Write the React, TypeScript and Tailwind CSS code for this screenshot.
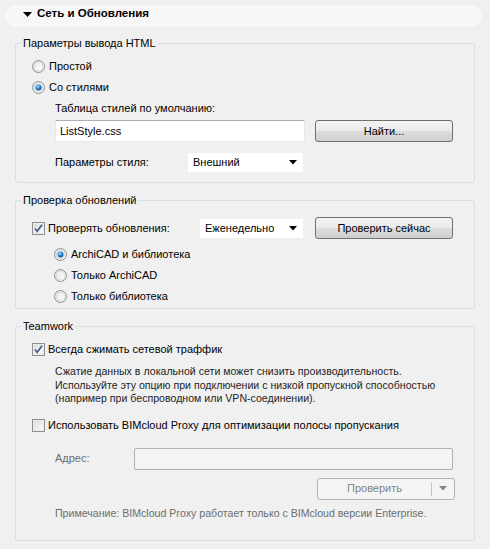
import React from "react";

const font = { fontFamily: '"Liberation Sans", Arial, sans-serif' };

const Radio = ({ checked }: { checked?: boolean }) => (
  <svg width="13" height="13" viewBox="0 0 13 13" className="shrink-0">
    <defs>
      <linearGradient id="rg" x1="0" y1="0" x2="1" y2="1">
        <stop offset="0" stopColor="#e6e6e6" />
        <stop offset="1" stopColor="#ffffff" />
      </linearGradient>
      <radialGradient id="rd" cx="0.4" cy="0.35" r="0.7">
        <stop offset="0" stopColor="#a9dcf6" />
        <stop offset="0.5" stopColor="#2a8ad4" />
        <stop offset="1" stopColor="#0d3a68" />
      </radialGradient>
    </defs>
    <circle cx="6.5" cy="6.5" r="6" fill="url(#rg)" stroke="#8e8f8f" />
    <circle cx="6.5" cy="6.5" r="4.5" fill="none" stroke="#d4d4d4" />
    {checked && <circle cx="6.5" cy="6.5" r="3" fill="url(#rd)" />}
  </svg>
);

const Check = ({ checked }: { checked?: boolean }) => (
  <svg width="13" height="13" viewBox="0 0 13 13" className="shrink-0">
    <defs>
      <linearGradient id="cg" x1="0" y1="0" x2="1" y2="1">
        <stop offset="0" stopColor="#dcdcdc" />
        <stop offset="1" stopColor="#ffffff" />
      </linearGradient>
    </defs>
    <rect x="0.5" y="0.5" width="12" height="12" fill="#f4f4f4" stroke="#8e8f8f" />
    <rect x="2" y="2" width="9" height="9" fill="url(#cg)" stroke="#e2e2e2" strokeWidth="0.8" />
    {checked && (
      <path d="M3 6.5 L5.2 9.2 L10 2.8" fill="none" stroke="#4a5f97" strokeWidth="1.8" />
    )}
  </svg>
);

const Arrow = ({ color = "#000" }: { color?: string }) => (
  <svg width="8" height="5" viewBox="0 0 8 5">
    <path d="M0 0 H8 L4 4.5 Z" fill={color} />
  </svg>
);

const Button = ({ label, className }: { label: string; className?: string }) => (
  <div
    className={`flex h-[22px] items-center justify-center rounded-[3px] border border-[#707070] bg-[linear-gradient(#f3f3f3_0%,#ebebeb_50%,#dddddd_51%,#cfcfcf_100%)] text-black ${className ?? ""}`}
  >
    {label}
  </div>
);

const Select = ({ value, className }: { value: string; className?: string }) => (
  <div
    className={`flex h-[21px] items-center justify-between border border-[#f0f0f0] bg-white pl-[5px] pr-[6px] ${className ?? ""}`}
  >
    <span>{value}</span>
    <Arrow />
  </div>
);

const Group = ({
  title,
  className,
  children,
}: {
  title: string;
  className?: string;
  children: React.ReactNode;
}) => (
  <fieldset className={`mx-[15px] rounded-[3px] border border-[#d5dfe5] ${className ?? ""}`}>
    <legend className="ml-[5px] px-[2px] leading-[14px]">{title}</legend>
    {children}
  </fieldset>
);

export default function App() {
  return (
    <div className="h-[549px] w-[490px] bg-[#f0f0f0] text-[11px] text-black" style={font}>
      <div className="pt-[5px] pl-[5px] pr-[8px]">
        <div className="flex h-[22px] items-center rounded-[11px] bg-[#f7f7f7] pb-[4px] pl-[18px]">
          <svg width="9" height="5" viewBox="0 0 9 5">
            <path d="M0 0 H9 L4.5 5 Z" fill="#000" />
          </svg>
          <span className="ml-[5px] text-[11.5px] font-bold">Сеть и Обновления</span>
        </div>
      </div>

      <Group title="Параметры вывода HTML" className="mt-[9px] pb-[9px]">
        <div className="pt-[6px] pl-[16px]">
          <div className="flex h-[21px] items-center gap-[4px]">
            <Radio />
            <span>Простой</span>
          </div>
          <div className="flex h-[21px] items-center gap-[4px]">
            <Radio checked />
            <span>Со стилями</span>
          </div>
          <div className="pl-[23px]">
            <div className="flex h-[21px] items-center">Таблица стилей по умолчанию:</div>
            <div className="mt-[1px] flex items-center">
              <div className="flex h-[22px] w-[250px] items-center border border-[#e3e9ef] border-t-[#abadb3] bg-white pl-[4px]">
                ListStyle.css
              </div>
              <Button label="Найти..." className="ml-[10px] w-[138px]" />
            </div>
            <div className="mt-[10px] flex items-center">
              <span className="w-[132px]">Параметры стиля:</span>
              <Select value="Внешний" className="w-[117px]" />
            </div>
          </div>
        </div>
      </Group>

      <Group title="Проверка обновлений" className="mt-[10px] pb-[1px]">
        <div className="pt-[10px] pl-[16px]">
          <div className="flex h-[22px] items-center">
            <Check checked />
            <span className="ml-[3px] w-[151px]">Проверять обновления:</span>
            <Select value="Еженедельно" className="w-[105px]" />
            <Button label="Проверить сейчас" className="ml-[11px] w-[138px]" />
          </div>
          <div className="mt-[5px] pl-[22px]">
            {[
              ["ArchiCAD и библиотека", true],
              ["Только ArchiCAD", false],
              ["Только библиотека", false],
            ].map(([t, c]) => (
              <div key={t as string} className="flex h-[21px] items-center gap-[4px]">
                <Radio checked={c as boolean} />
                <span>{t as string}</span>
              </div>
            ))}
          </div>
        </div>
      </Group>

      <Group title="Teamwork" className="mt-[10px] pb-[20px]">
        <div className="pt-[6px] pl-[16px]">
          <div className="flex h-[21px] items-center">
            <Check checked />
            <span className="ml-[3px]">Всегда сжимать сетевой траффик</span>
          </div>
          <div className="mt-[5px] pl-[23px] text-[10.6px] leading-[13.5px] text-[#1e1e1e]">
            <div>Сжатие данных в локальной сети может снизить производительность.</div>
            <div>Используйте эту опцию при подключении с низкой пропускной способностью</div>
            <div>(например при беспроводном или VPN-соединении).</div>
          </div>
          <div className="mt-[9px] flex h-[21px] items-center">
            <Check />
            <span className="ml-[3px]">Использовать BIMcloud Proxy для оптимизации полосы пропускания</span>
          </div>
          <div className="mt-[12px] flex items-center pl-[23px]">
            <span className="w-[79px] text-[#6d6d6d]">Адрес:</span>
            <div className="h-[22px] w-[319px] rounded-[2px] border border-[#adb2b5] bg-[#f4f4f4]" />
          </div>
          <div className="mt-[8px] flex justify-end pr-[19px]">
            <div className="flex h-[22px] w-[138px] items-center rounded-[3px] border border-[#adb2b5] bg-[#f4f4f4] text-[#838383]">
              <span className="flex-1 text-center">Проверить</span>
              <div className="h-[14px] w-px bg-[#c4c4c4]" />
              <div className="flex w-[22px] justify-center">
                <Arrow color="#838383" />
              </div>
            </div>
          </div>
          <div className="mt-[7px] pl-[23px] text-[10.6px] leading-[13px] text-[#6d6d6d]">
            Примечание: BIMcloud Proxy работает только с BIMcloud версии Enterprise.
          </div>
        </div>
      </Group>
    </div>
  );
}
